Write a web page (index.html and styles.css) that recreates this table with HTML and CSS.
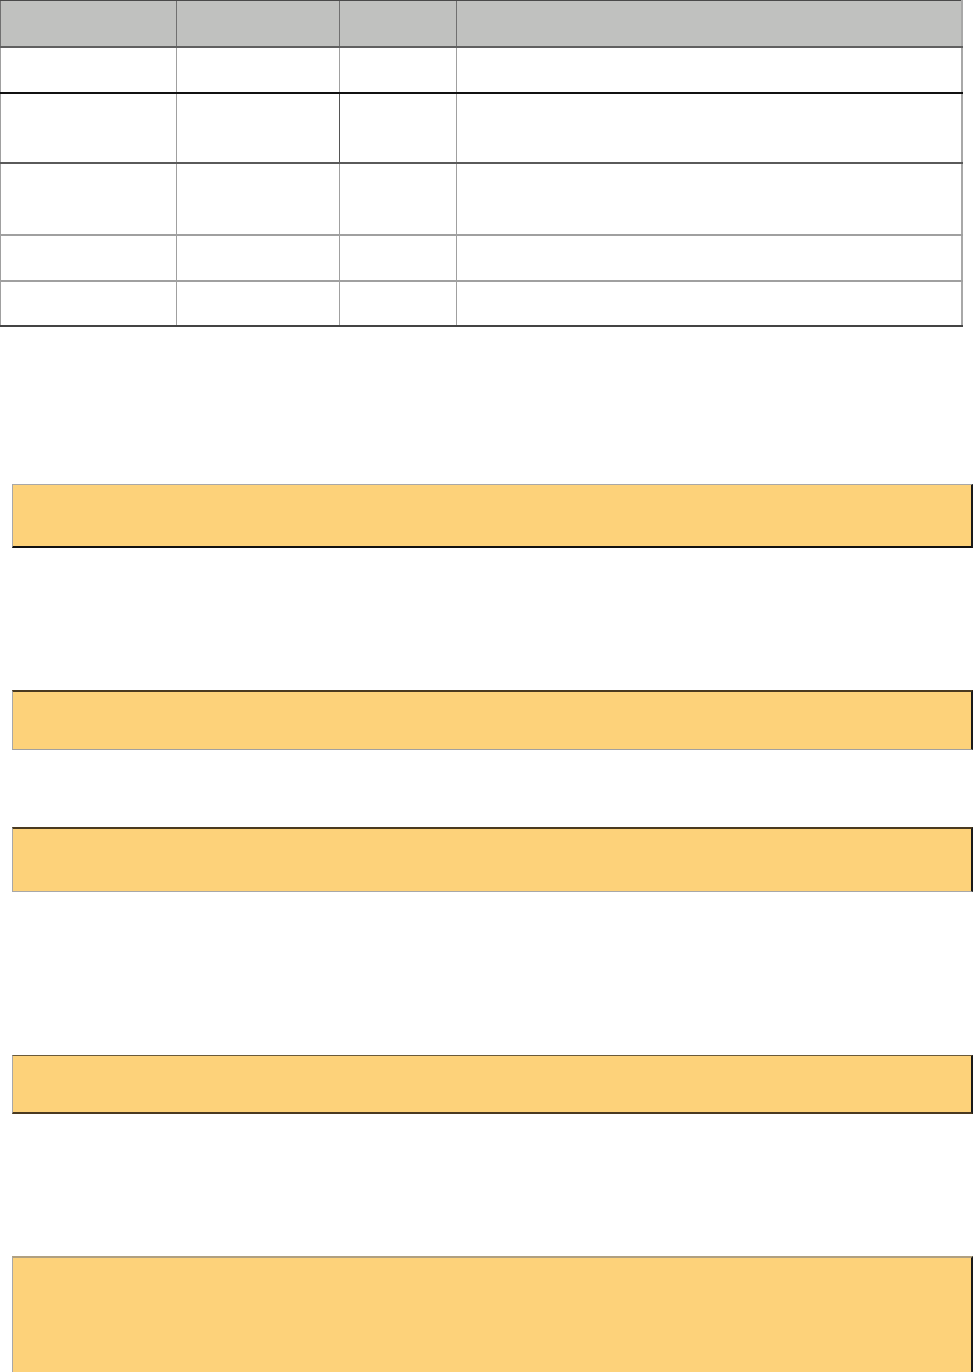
FILE: index.html
```html
<!DOCTYPE html>
<html>
<head>
<meta charset="utf-8">
<link rel="stylesheet" href="styles.css">
</head>
<body>
<table class="grid">
  <thead>
    <tr class="head"><th class="c1"></th><th class="c2"></th><th class="c3"></th><th class="c4"></th></tr>
  </thead>
  <tbody>
    <tr class="r1"><td></td><td></td><td></td><td></td></tr>
    <tr class="r2"><td></td><td></td><td></td><td></td></tr>
    <tr class="r3"><td></td><td></td><td></td><td></td></tr>
    <tr class="r4"><td></td><td></td><td></td><td></td></tr>
    <tr class="r5"><td></td><td></td><td></td><td></td></tr>
  </tbody>
</table>
<div class="notes">
  <div class="note n1"></div>
  <div class="note n2"></div>
  <div class="note n3"></div>
  <div class="note n4"></div>
  <div class="note n5"></div>
</div>
</body>
</html>
```
FILE: styles.css
```css
html, body { margin: 0; padding: 0; background: #ffffff; }
body { width: 973px; font-family: "Liberation Sans", Arial, sans-serif; }

.grid {
  width: 963px;
  border-collapse: collapse;
  table-layout: fixed;
  border-left: 1px solid #555;
  border-right: 2px solid #a8a8a8;
}
.grid th, .grid td { padding: 0; border-left: 1px solid #a0a0a0; }
.grid th { background: #c0c1bf; border-top: 1px solid #4a4a4a; border-bottom: 2px solid #606060; border-left-color: #707070; }
.grid .c1 { width: 175px; }
.grid .c2 { width: 162px; }
.grid .c3 { width: 116px; }
.head { height: 46px; }
.r1 { height: 46px; }
.r2 { height: 70px; }
.r3 { height: 72px; }
.r4 { height: 46px; }
.r5 { height: 45px; }
.r1 td { border-bottom: 2px solid #111; }
.r2 td { border-bottom: 2px solid #5a5a5a; }
.r2 td:nth-child(3) { border-left-color: #555; }
.r3 td, .r4 td { border-bottom: 2px solid #a0a0a0; }
.r5 td { border-bottom: 2px solid #444; }

.notes { display: flex; flex-direction: column; padding-left: 12px; }
.note {
  width: 958px;
  background: #fdd27a;
  border: 1px solid #a8a8a8;
  border-right: 2px solid #1a1a1a;
}
.n1 { margin-top: 157px; height: 61px; border-bottom: 2px solid #111; }
.n2 { margin-top: 142px; height: 57px; border-top: 2px solid #4a3a20; border-bottom-color: #a0a0a0; }
.n3 { margin-top: 77px; height: 62px; border-top: 2px solid #4a3a20; }
.n4 { margin-top: 163px; height: 56px; border-top: 1px solid #6a5a3a; border-bottom: 2px solid #4a3a20; }
.n5 { margin-top: 142px; height: 116px; border-top: 2px solid #b0a080; border-bottom: none; }
```
